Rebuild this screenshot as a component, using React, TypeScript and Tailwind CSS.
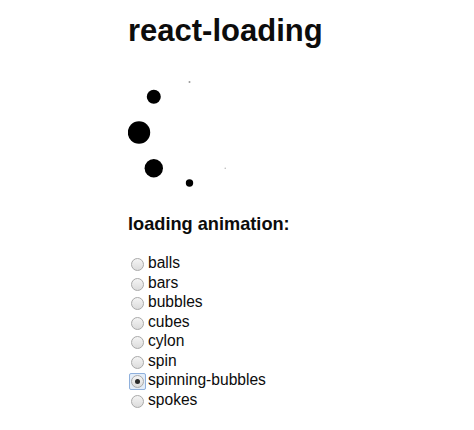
import React from "react";

const types = [
  "balls",
  "bars",
  "bubbles",
  "cubes",
  "cylon",
  "spin",
  "spinning-bubbles",
  "spokes",
];

// Frame of the spinning-bubbles loader: eight dots on a ring, each at its own size.
const dots = [
  { angle: 0, r: 1, fill: "#9a9a9a" },
  { angle: 45, r: 0, fill: "#000" },
  { angle: 90, r: 0, fill: "#000" },
  { angle: 135, r: 0.7, fill: "#b0b0b0" },
  { angle: 180, r: 3.7, fill: "#000" },
  { angle: 225, r: 9.2, fill: "#000" },
  { angle: 270, r: 11.2, fill: "#000" },
  { angle: 315, r: 7, fill: "#000" },
];

function Spinner() {
  const cx = 61.5;
  const cy = 64.5;
  const R = 50.5;
  return (
    <svg width="128" height="128" viewBox="0 0 128 128" className="block">
      {dots.map((d) => {
        const a = (d.angle * Math.PI) / 180;
        const x = cx + R * Math.sin(a);
        const y = cy - R * Math.cos(a);
        return d.r > 0 ? <circle key={d.angle} cx={x} cy={y} r={d.r} fill={d.fill} /> : null;
      })}
    </svg>
  );
}

function Radio({ checked }: { checked: boolean }) {
  const dot = (
    <span className="flex h-[13px] w-[13px] items-center justify-center rounded-full border border-[#a9a9a9] bg-gradient-to-b from-[#f4f4f4] to-[#dcdcdc]">
      {checked && <span className="h-[5px] w-[5px] rounded-full bg-[#2a2a2a]" />}
    </span>
  );
  if (checked) {
    return (
      <span className="mt-[3px] ml-[1px] mr-[2px] flex h-[17px] w-[17px] items-center justify-center rounded-[2px] border border-[#8fb0dc] bg-[#e3edf9]">
        {dot}
      </span>
    );
  }
  return <span className="mt-[5px] ml-[3px] mr-[4px] block">{dot}</span>;
}

export default function App() {
  const selected = "spinning-bubbles";
  return (
    <div className="min-h-[430px] w-[474px] bg-white pl-[128px] text-[#0c0c0c]" style={{ fontFamily: '"Liberation Sans", Arial, sans-serif' }}>
      <h1 className="pt-[13px] text-[31px] font-bold leading-[36px]">react-loading</h1>
      <div className="mt-[19px]">
        <Spinner />
      </div>
      <h3 className="mt-[17px] text-[18.2px] font-bold leading-[22px]">loading animation:</h3>
      <div className="mt-[18px] flex flex-col">
        {types.map((t) => (
          <label key={t} className="flex h-[19.5px] items-start text-[15.6px] leading-[19.5px]">
            <Radio checked={t === selected} />
            <span>{t}</span>
          </label>
        ))}
      </div>
    </div>
  );
}
